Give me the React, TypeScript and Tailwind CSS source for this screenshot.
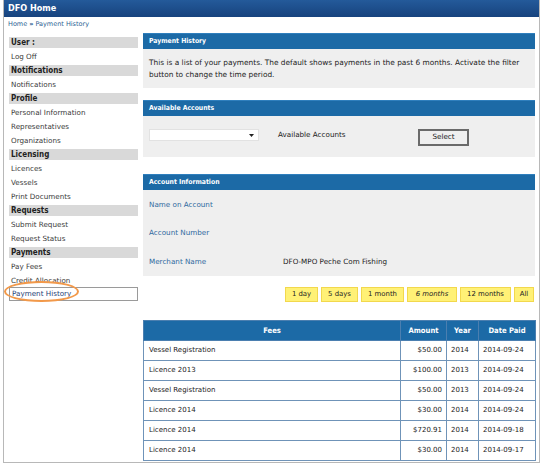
import React from "react";

const font = { fontFamily: '"DejaVu Sans", Verdana, sans-serif' };
const bold = { fontFamily: '"DejaVu Sans Condensed", "DejaVu Sans", Verdana, sans-serif' };

const MENU: { title: string; items: string[] }[] = [
  { title: "User :", items: ["Log Off"] },
  { title: "Notifications", items: ["Notifications"] },
  { title: "Profile", items: ["Personal Information", "Representatives", "Organizations"] },
  { title: "Licensing", items: ["Licences", "Vessels", "Print Documents"] },
  { title: "Requests", items: ["Submit Request", "Request Status"] },
  { title: "Payments", items: ["Pay Fees", "Credit Allocation", "Payment History"] },
];

const FILTERS = [
  { label: "1 day", w: "w-[33px]" },
  { label: "5 days", w: "w-[37px]" },
  { label: "1 month", w: "w-[43px]" },
  { label: "6 months", w: "w-[50px]", active: true },
  { label: "12 months", w: "w-[51px]" },
  { label: "All", w: "w-[20px]" },
];

const PAYMENTS = [
  { fee: "Vessel Registration", amount: "$50.00", year: "2014", date: "2014-09-24" },
  { fee: "Licence 2013", amount: "$100.00", year: "2013", date: "2014-09-24" },
  { fee: "Vessel Registration", amount: "$50.00", year: "2013", date: "2014-09-24" },
  { fee: "Licence 2014", amount: "$30.00", year: "2014", date: "2014-09-24" },
  { fee: "Licence 2014", amount: "$720.91", year: "2014", date: "2014-09-18" },
  { fee: "Licence 2014", amount: "$30.00", year: "2014", date: "2014-09-17" },
];

function PanelHeader({ children }: { children: React.ReactNode }) {
  return (
    <div
      className="h-[16px] bg-[#1c6aa6] border-t border-[#2f7fbd] pl-[6px] flex items-center text-[6.8px] font-bold text-white"
      style={bold}
    >
      {children}
    </div>
  );
}

export default function App() {
  return (
    <div className="relative w-[543px] h-[468px] bg-white overflow-hidden text-[#333]" style={font}>
      <div className="ml-[3px] w-[537px] h-[463px] border-l border-r border-b border-[#b8b8b8] overflow-hidden">
        {/* top bar */}
        <div
          className="h-[17px] bg-gradient-to-b from-[#245a9a] to-[#17437e] flex items-center pl-[4px] text-[9px] font-bold text-white"
          style={bold}
        >
          DFO Home
        </div>

        {/* breadcrumb */}
        <div className="h-[16px] flex items-center pl-[4px] text-[6.5px] text-[#2c5f93]">
          Home <span className="mx-[2px] font-bold">»</span> Payment History
        </div>

        <div className="flex">
          {/* sidebar */}
          <div className="w-[129px] ml-[5px] mt-[4px] shrink-0">
            {MENU.map((sec) => (
              <div key={sec.title}>
                <div
                  className="h-[11px] bg-[#d9d9d9] pl-[2px] flex items-center text-[8px] font-bold text-[#222]"
                  style={bold}
                >
                  {sec.title}
                </div>
                <div className="pt-[2px] pb-[1px]">
                  {sec.items.map((it) =>
                    it === "Payment History" ? (
                      <div key={it} className="h-[14px] border border-[#9a9a9a] pl-[2px] flex items-center text-[7.2px] text-[#1f3f77] -mt-[1px]">
                        {it}
                      </div>
                    ) : (
                      <div key={it} className="h-[14px] pl-[2px] flex items-center text-[7.2px] text-[#3a3a3a]">
                        {it}
                      </div>
                    )
                  )}
                </div>
              </div>
            ))}
          </div>

          {/* main */}
          <div className="w-[392px] ml-[5px] shrink-0">
            <PanelHeader>Payment History</PanelHeader>
            <div className="h-[39px] bg-[#efefef] px-[6px] pt-[8px] text-[7.4px] leading-[12px] text-[#222]">
              This is a list of your payments. The default shows payments in the past 6 months. Activate the filter button to change the time period.
            </div>

            <div className="mt-[12px]">
              <PanelHeader>Available Accounts</PanelHeader>
              <div className="h-[41px] bg-[#efefef] px-[6px] pt-[13px] flex items-start">
                <div className="w-[110px] h-[12px] bg-white border border-[#e2e2e2] flex items-center justify-end pr-[4px]">
                  <svg width="5" height="3" viewBox="0 0 5 3">
                    <path d="M0 0h5L2.5 3z" fill="#222" />
                  </svg>
                </div>
                <div className="ml-[19px] w-[140px] mt-[1px] text-[7.2px] text-[#222]">Available Accounts</div>
                <div className="w-[51px] h-[17px] border-2 border-[#6a6a6a] bg-[#efefef] flex items-center justify-center text-[7.2px] text-[#222]">
                  Select
                </div>
              </div>
            </div>

            <div className="mt-[17px]">
              <PanelHeader>Account Information</PanelHeader>
              <div className="h-[86px] bg-[#efefef] px-[6px] pt-[10px] text-[7.2px]">
                <div className="h-[28px] text-[#2f6aa0]">Name on Account</div>
                <div className="h-[29px] text-[#2f6aa0]">Account Number</div>
                <div className="flex">
                  <div className="w-[134px] text-[#2f6aa0]">Merchant Name</div>
                  <div className="text-[#222]">DFO-MPO Peche Com Fishing</div>
                </div>
              </div>
            </div>

            {/* filters */}
            <div className="mt-[11px] flex justify-end gap-[3px] pr-[1px]">
              {FILTERS.map((f) => (
                <div
                  key={f.label}
                  className={`${f.w} h-[15px] bg-[#fff176] border border-[#f2d84d] flex items-center justify-center text-[6.9px] text-[#222] ${f.active ? "italic" : ""}`}
                >
                  {f.label}
                </div>
              ))}
            </div>

            {/* table */}
            <table className="mt-[18px] w-[392px] border-collapse text-[7px] table-fixed">
              <colgroup>
                <col className="w-[257px]" />
                <col className="w-[46px]" />
                <col className="w-[32px]" />
                <col className="w-[57px]" />
              </colgroup>
              <thead>
                <tr className="h-[20px] bg-[#1c6aa6] text-white text-[7.6px]" style={bold}>
                  <th className="border border-[#4b7fb0] font-bold">Fees</th>
                  <th className="border border-[#4b7fb0] font-bold">Amount</th>
                  <th className="border border-[#4b7fb0] font-bold">Year</th>
                  <th className="border border-[#4b7fb0] font-bold">Date Paid</th>
                </tr>
              </thead>
              <tbody>
                {PAYMENTS.map((p, i) => (
                  <tr key={i} className="h-[20px] text-[#222]">
                    <td className="border border-[#6f93b8] pl-[5px]">{p.fee}</td>
                    <td className="border border-[#6f93b8] text-right pr-[4px]">{p.amount}</td>
                    <td className="border border-[#6f93b8] pl-[4px]">{p.year}</td>
                    <td className="border border-[#6f93b8] pl-[4px]">{p.date}</td>
                  </tr>
                ))}
              </tbody>
            </table>
          </div>
        </div>
      </div>

      {/* annotation ellipse */}
      <div className="absolute left-[4px] top-[281px] w-[75px] h-[21px] rounded-[50%] border-2 border-[#f2994a]" />
    </div>
  );
}
